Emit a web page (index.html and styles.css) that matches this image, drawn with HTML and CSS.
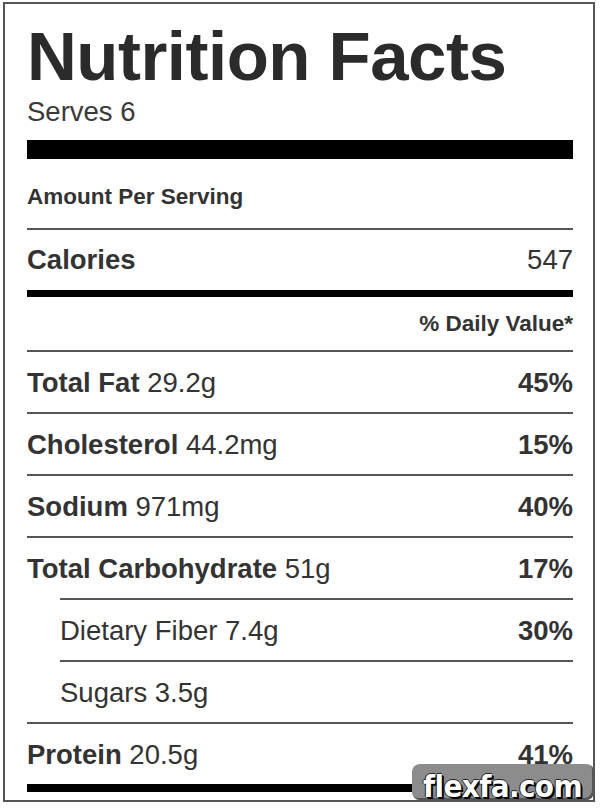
FILE: index.html
```html
<!DOCTYPE html>
<html>
<head>
<meta charset="utf-8">
<link rel="stylesheet" href="styles.css">
</head>
<body>
<div class="label">
  <h1 class="title">Nutrition Facts</h1>
  <div class="serves">Serves 6</div>
  <div class="bar"></div>
  <div class="amount">Amount Per Serving</div>
  <div class="calories"><b>Calories</b><span>547</span></div>
  <div class="dv">% Daily Value*</div>
  <div class="row"><span><b>Total Fat</b> 29.2g</span><b>45%</b></div>
  <div class="row"><span><b>Cholesterol</b> 44.2mg</span><b>15%</b></div>
  <div class="row"><span><b>Sodium</b> 971mg</span><b>40%</b></div>
  <div class="row"><span><b>Total Carbohydrate</b> 51g</span><b>17%</b></div>
  <div class="row sub"><span>Dietary Fiber 7.4g</span><b>30%</b></div>
  <div class="row sub"><span>Sugars 3.5g</span></div>
  <div class="row last"><span><b>Protein</b> 20.5g</span><b>41%</b></div>
</div>
<div class="watermark">flexfa.com</div>
</body>
</html>
```
FILE: styles.css
```css
html, body {
  margin: 0;
  padding: 0;
  background: #fff;
}
body {
  font-family: "Liberation Sans", Arial, sans-serif;
  color: #333;
  width: 600px;
  height: 808px;
  overflow: hidden;
  position: relative;
}
.label {
  margin: 2px 5px 0 3px;
  border: 2px solid #555;
  padding: 0 20px 8px 22px;
}
.title {
  margin: 0;
  padding-top: 18px;
  font-size: 69px;
  line-height: 69px;
  font-weight: bold;
  letter-spacing: -0.5px;
  color: #2b2b2b;
}
.serves {
  margin-top: 7.4px;
  font-size: 27.5px;
  line-height: 27.5px;
  color: #3a3a3a;
}
.bar {
  margin-top: 14px;
  height: 19px;
  background: #000;
}
.amount {
  padding: 27.6px 0 19px;
  font-size: 22.5px;
  line-height: 22.5px;
  font-weight: bold;
  border-bottom: 2px solid #555;
}
.calories {
  display: flex;
  justify-content: space-between;
  padding: 16px 0 16.5px;
  font-size: 27.5px;
  line-height: 27.5px;
  border-bottom: 7px solid #000;
}
.dv {
  text-align: right;
  padding: 15.6px 0 15px;
  font-size: 22.5px;
  line-height: 22.5px;
  font-weight: bold;
}
.row {
  display: flex;
  justify-content: space-between;
  border-top: 2px solid #555;
  padding: 16.5px 0 16px;
  font-size: 27.5px;
  line-height: 27.5px;
}
.row.sub {
  margin-left: 33px;
}
.row.last {
  border-bottom: 8px solid #000;
}
.watermark {
  position: absolute;
  left: 412px;
  top: 764px;
  width: 171px;
  height: 32px;
  padding: 4px 0 0 11px;
  background: #8c8c8c;
  border-radius: 8px;
  box-shadow: inset -2px -2px 0 #555;
  font-family: "DejaVu Sans Condensed", "DejaVu Sans", sans-serif;
  font-stretch: condensed;
  font-weight: bold;
  font-size: 31px;
  letter-spacing: -0.6px;
  line-height: 36px;
  color: #fff;
  white-space: nowrap;
  text-shadow: 2px 2px 0 #000, 1px 1px 0 #000, -1px 0 0 #222, 0 -1px 0 #222;
}
```
